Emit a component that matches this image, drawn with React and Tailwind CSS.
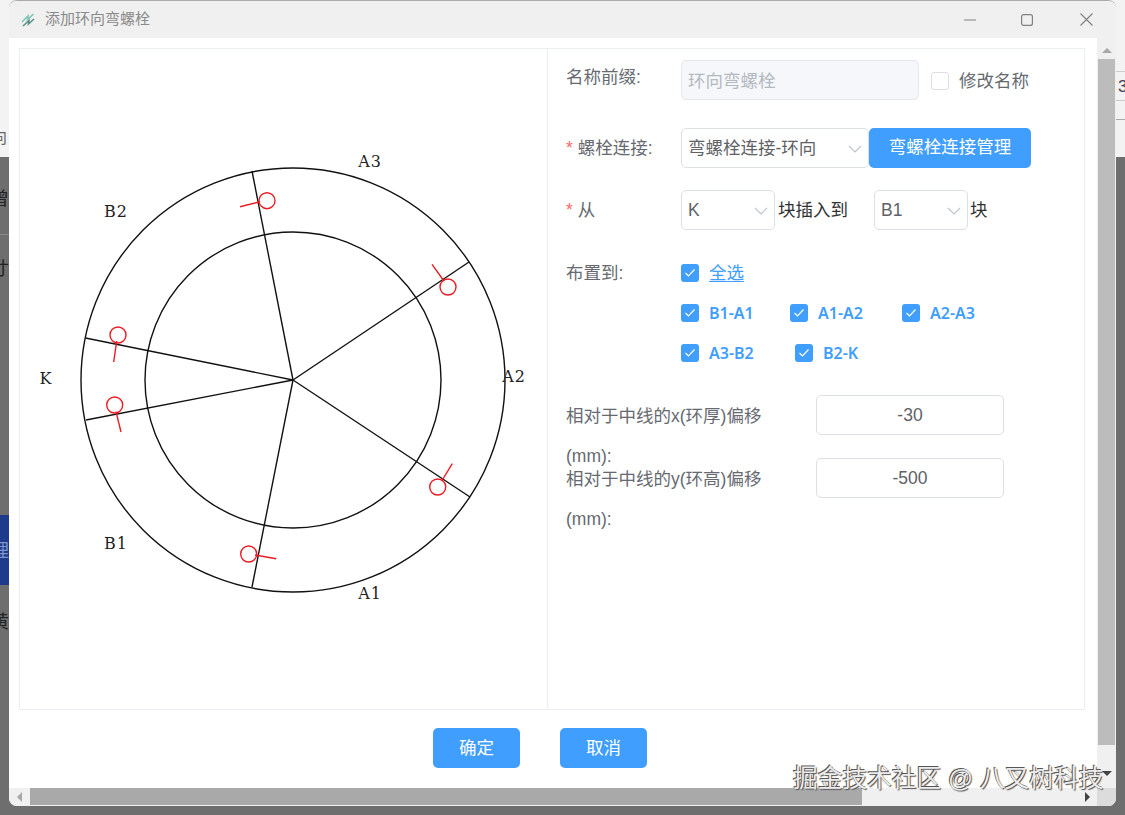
import React from "react";

const Chevron = () => (
  <svg width="16" height="10" viewBox="0 0 16 10" fill="none" stroke="#c0c4cc" strokeWidth="1.2" className="absolute right-[5px] top-[15px]">
    <polyline points="2,2 8,8 14,2" />
  </svg>
);

const Check = () => (
  <span className="flex h-[18px] w-[18px] shrink-0 items-center justify-center rounded-[3px] bg-[#409eff]">
    <svg width="12" height="10" viewBox="0 0 12 10" fill="none" stroke="#fff" strokeWidth="1.2">
      <polyline points="1.5,5 4.5,8 10.5,1.5" />
    </svg>
  </span>
);

const Select = ({ value, w }) => (
  <div className={`relative flex h-10 ${w} shrink-0 items-center rounded-[5px] border border-[#dcdfe6] bg-white pl-[6px] text-[#606266]`}>
    {value}
    <Chevron />
  </div>
);

const Opt = ({ label, w }) => (
  <div className={`flex ${w} items-center gap-[10px]`}>
    <Check />
    <span className="font-['Noto_Sans','Noto_Sans_CJK_SC',sans-serif] text-[16px] font-semibold text-[#409eff]">{label}</span>
  </div>
);

const Req = () => <span className="mr-[5px] text-[#f56c6c]">*</span>;

const lines = [
  [252, 171],
  [85.5, 338],
  [469, 262],
  [470, 497],
  [252, 587],
  [86, 420],
];

const bolts = [
  [267, 200.7, 240, 206.7, 260, 201.7],
  [118, 335, 113.7, 362, 116.7, 341],
  [448, 287, 432, 264.3, 444, 281],
  [114.7, 405, 121, 432, 116, 411.7],
  [248.7, 554, 276.3, 558.7, 255, 555],
  [437.7, 487, 452.3, 463.7, 441.7, 481],
];

const labels = [
  ["A3", 370, 167],
  ["B2", 116, 217],
  ["K", 46, 384],
  ["A2", 514, 382],
  ["B1", 116, 549],
  ["A1", 370, 599],
];

const Drawing = () => (
  <svg width="528" height="660" viewBox="20 49 528 660" className="block">
    <circle cx="293" cy="380" r="212" fill="none" stroke="#111" strokeWidth="1.4" />
    <circle cx="293" cy="380" r="148" fill="none" stroke="#111" strokeWidth="1.4" />
    {lines.map(([x, y], i) => (
      <line key={i} x1="293" y1="380" x2={x} y2={y} stroke="#111" strokeWidth="1.4" />
    ))}
    {bolts.map(([cx, cy, x1, y1, x2, y2], i) => (
      <g key={i} fill="none" stroke="#ea1c24" strokeWidth="1.4">
        <circle cx={cx} cy={cy} r="8" />
        <line x1={x1} y1={y1} x2={x2} y2={y2} />
      </g>
    ))}
    {labels.map(([t, x, y]) => (
      <text key={t} x={x} y={y} textAnchor="middle" fontSize="16" letterSpacing="1" fill="#222" fontFamily="'DejaVu Serif','Liberation Serif',serif">
        {t}
      </text>
    ))}
  </svg>
);

export default function App() {
  return (
    <div className="relative h-[815px] w-[1125px] overflow-hidden bg-[#6e6e6e] font-['Liberation_Sans','Noto_Sans_CJK_SC',sans-serif] text-[17.5px]">
      {/* desktop behind the window */}
      <div className="h-[157px] bg-[#f3f3f3]" />
      <div className="absolute left-[-9px] top-[126px] text-[16px] text-[#666]">向</div>
      <div className="absolute left-[-9px] top-[186px] text-[18px] text-[#222]">曾</div>
      <div className="absolute left-[-9px] top-[256px] text-[18px] text-[#222]">寸</div>
      <div className="absolute left-0 top-[234px] h-px w-[9px] bg-[#888]" />
      <div className="absolute left-0 top-[515px] h-[70px] w-[9px] bg-[#1e3a8a]" />
      <div className="absolute left-[-9px] top-[538px] text-[18px] text-[#7f93cc]">理</div>
      <div className="absolute left-[-9px] top-[609px] text-[18px] text-[#222]">黄</div>
      <div className="absolute left-[1116px] top-[71px] h-px w-[9px] bg-[#ccc]" />
      <div className="absolute left-[1116px] top-[100px] h-px w-[9px] bg-[#ccc]" />
      <div className="absolute left-[1116px] top-[119px] h-px w-[9px] bg-[#aaa]" />
      <div className="absolute left-[1118px] top-[74px] text-[17px] text-[#445]">3</div>

      {/* window */}
      <div className="absolute left-[9px] top-0 flex h-[806px] w-[1107px] flex-col overflow-hidden rounded-[8px] border-t border-[#aaa] bg-white">
        <div className="flex h-[37px] shrink-0 items-center bg-[#f0f0f0] pl-[12px]">
          <svg width="14" height="14" viewBox="0 0 14 14" fill="none" strokeWidth="1.6">
            <path d="M1 9 L7 3 L6.5 6.5 L12.5 1" stroke="#7cc8b8" />
            <path d="M2 13 L8 7.5 L7.5 11 L13 6" stroke="#5a8f88" />
          </svg>
          <span className="ml-[10px] text-[15px] text-[#8a8a8a]">添加环向弯螺栓</span>
          <div className="ml-auto flex items-center">
            <svg width="12" height="12" viewBox="0 0 12 12" stroke="#808080" fill="none" className="mr-[45px]">
              <line x1="0" y1="6" x2="12" y2="6" strokeWidth="1.2" />
            </svg>
            <svg width="12" height="12" viewBox="0 0 12 12" stroke="#808080" fill="none" className="mr-[47px]">
              <rect x="0.6" y="0.6" width="10.8" height="10.8" rx="2" strokeWidth="1.2" />
            </svg>
            <svg width="13" height="13" viewBox="0 0 13 13" stroke="#808080" fill="none" className="mr-[23px]">
              <path d="M0.5 0.5 L12.5 12.5 M12.5 0.5 L0.5 12.5" strokeWidth="1.1" />
            </svg>
          </div>
        </div>

        <div className="flex min-h-0 flex-1">
          <div className="flex min-w-0 flex-1 flex-col">
            <div className="flex-1 pl-[10px] pr-[12px] pt-[10px]">
              <div className="flex h-[662px] border border-[#ebeef5]">
                <div className="w-[528px] shrink-0 border-r border-[#ebeef5]">
                  <Drawing />
                </div>
                <div className="flex-1 pl-[18px] pt-[11px] text-[#666a70]">
                  <div className="flex h-10 items-start">
                    <div className="w-[115px] shrink-0 leading-[34px]">名称前缀:</div>
                    <div className="flex h-10 w-[238px] items-center rounded-[5px] border border-[#e4e7ed] bg-[#f5f7fa] pl-[6px] pt-[2px] text-[#b4b8c0]">环向弯螺栓</div>
                    <span className="ml-[12px] mt-[12px] h-[18px] w-[18px] rounded-[3px] border border-[#dcdfe6] bg-white" />
                    <span className="ml-[10px] mt-[2px] leading-[38px]">修改名称</span>
                  </div>
                  <div className="mt-[28px] flex h-10 items-center">
                    <div className="w-[115px] shrink-0 pt-px"><Req />螺栓连接:</div>
                    <Select value="弯螺栓连接-环向" w="w-[188px] pt-px" />
                    <div className="flex h-10 w-[162px] items-center justify-center rounded-[5px] bg-[#409eff] pb-[2px] text-white">弯螺栓连接管理</div>
                  </div>
                  <div className="mt-[22px] flex h-10 items-center">
                    <div className="w-[115px] shrink-0 pt-px"><Req />从</div>
                    <Select value="K" w="w-[94px]" />
                    <span className="ml-[3px] w-[96px] pt-px text-[#303133]">块插入到</span>
                    <Select value="B1" w="w-[94px]" />
                    <span className="ml-[2px] pt-px text-[#303133]">块</span>
                  </div>
                  <div className="mt-[23px] flex h-10 items-center">
                    <div className="w-[115px] shrink-0">布置到:</div>
                    <div className="flex items-center gap-[10px]">
                      <Check />
                      <span className="text-[#409eff] underline underline-offset-2">全选</span>
                    </div>
                  </div>
                  <div className="ml-[115px] flex h-10 items-center">
                    <Opt label="B1-A1" w="w-[109px]" />
                    <Opt label="A1-A2" w="w-[112px]" />
                    <Opt label="A2-A3" w="w-[120px]" />
                  </div>
                  <div className="ml-[115px] flex h-10 items-center">
                    <Opt label="A3-B2" w="w-[114px]" />
                    <Opt label="B2-K" w="w-[100px]" />
                  </div>
                  <div className="mt-[22px] flex h-[63px] items-start">
                    <div className="w-[250px] shrink-0 pr-[30px] pt-px leading-[40px]">相对于中线的x(环厚)偏移 (mm):</div>
                    <div className="flex h-10 w-[188px] items-center justify-center rounded-[5px] border border-[#dcdfe6] bg-white text-[#606266]">-30</div>
                  </div>
                  <div className="flex h-10 items-start">
                    <div className="w-[250px] shrink-0 pr-[30px] pt-px leading-[40px]">相对于中线的y(环高)偏移 (mm):</div>
                    <div className="flex h-10 w-[188px] items-center justify-center rounded-[5px] border border-[#dcdfe6] bg-white text-[#606266]">-500</div>
                  </div>
                </div>
              </div>
            </div>
            <div className="flex h-[79px] shrink-0 justify-center gap-10 pr-[26px] pt-[18px]">
              <div className="flex h-10 w-[87px] items-center justify-center rounded-[5px] bg-[#409eff] text-white">确定</div>
              <div className="flex h-10 w-[87px] items-center justify-center rounded-[5px] bg-[#409eff] text-white">取消</div>
            </div>
          </div>
          {/* vertical scrollbar */}
          <div className="flex w-[19px] shrink-0 flex-col bg-[#f0f0f0]">
            <div className="flex h-[21px] items-center justify-center pt-[3px]">
              <span className="h-0 w-0 border-x-[5px] border-b-[5px] border-x-transparent border-b-[#a8a8a8]" />
            </div>
            <div className="ml-px h-[686px] w-[17px] bg-[#bcbcbc]" />
            <div className="flex flex-1 items-center justify-center pt-[13px]">
              <span className="h-0 w-0 border-x-[5px] border-t-[5px] border-x-transparent border-t-[#444]" />
            </div>
          </div>
        </div>

        {/* horizontal scrollbar */}
        <div className="flex h-[18px] shrink-0 bg-[#f0f0f0]">
          <div className="flex w-[21px] items-center justify-center">
            <span className="h-0 w-0 border-y-[5px] border-r-[5px] border-y-transparent border-r-[#a8a8a8]" />
          </div>
          <div className="h-[17px] w-[832px] bg-[#a9a9a9]" />
          <div className="flex flex-1 items-center justify-end pr-[7px]">
            <span className="h-0 w-0 border-y-[5px] border-l-[5px] border-y-transparent border-l-[#444]" />
          </div>
          <div className="w-[19px] bg-[#dcdcdc]" />
        </div>
      </div>

      {/* watermark */}
      <div className="absolute left-[793px] top-[763px] whitespace-nowrap text-[24.7px] leading-[32px] text-[#ececec] [text-shadow:-1px_-1px_0_#555,1px_1px_1px_#555]">
        掘金技术社区 @ 八叉树科技
      </div>
    </div>
  );
}
